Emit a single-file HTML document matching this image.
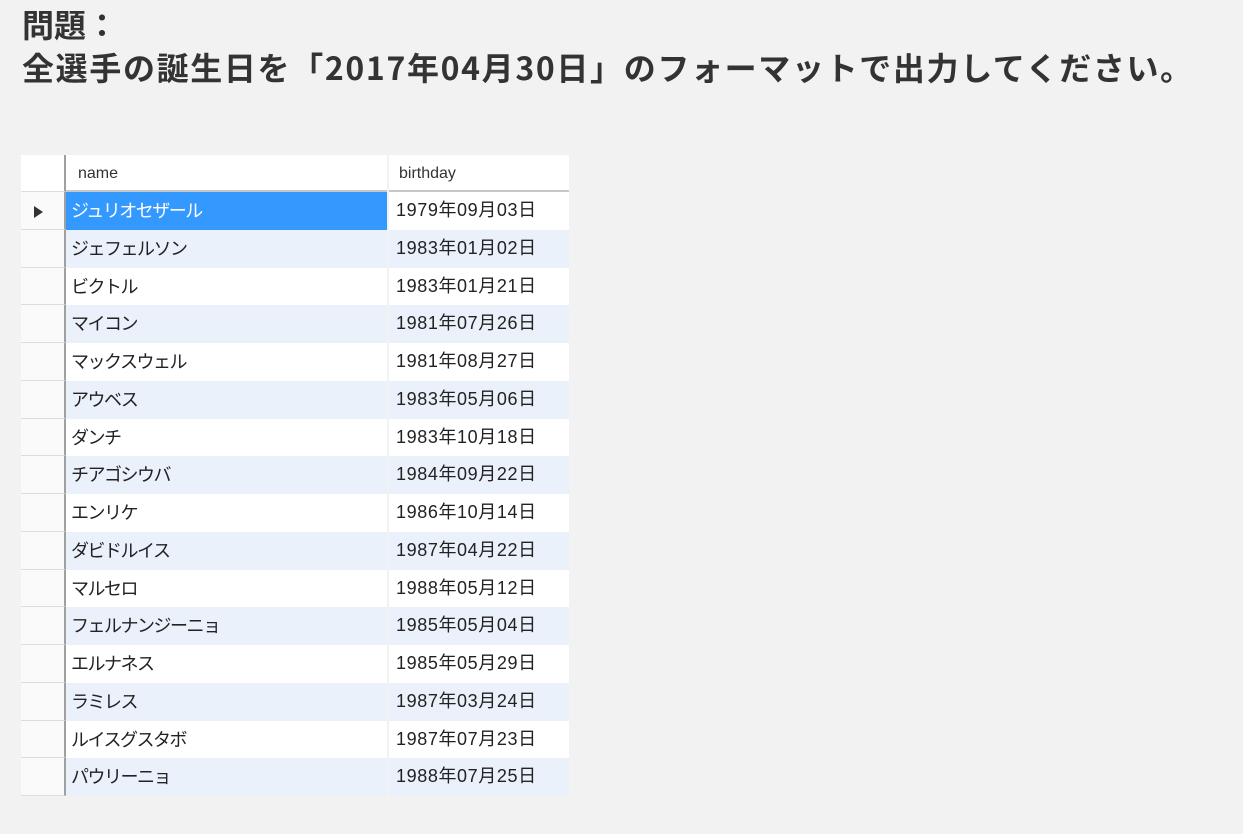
<!DOCTYPE html>
<html><head><meta charset="utf-8"><style>
body{margin:0;width:1243px;height:834px;background:#f2f2f2;overflow:hidden;position:relative;font-family:"Liberation Sans","Noto Sans CJK JP",sans-serif}
.t{position:absolute;left:22px;font-weight:bold;color:#333;font-size:32px;font-family:"Noto Sans CJK JP",sans-serif;white-space:nowrap;line-height:40px}
.tbl{position:absolute;left:21px;top:155px;width:548px}
.r{position:relative;height:37.75px;font-size:18px;color:#222}
.ind{position:absolute;left:0;top:0;width:45px;height:100%;background:#fafafa;border-bottom:1px solid #ddd;box-sizing:border-box;border-right:2px solid #a0a0a0}
.n,.b{position:absolute;top:0;height:100%;box-sizing:border-box;line-height:37px;padding-left:5px;white-space:nowrap;font-family:"Noto Sans CJK JP",sans-serif;font-weight:normal;letter-spacing:-1.5px;color:#222}
.n{left:45px;width:321px}
.b{left:368px;width:180px;padding-left:7px;font-family:"Liberation Sans","Noto Sans CJK JP",sans-serif;letter-spacing:0.6px}
.alt .n,.alt .b{background:#eaf1fb}
.r:not(.alt) .n,.r:not(.alt) .b{background:#fff}
.h .n,.h .b{background:#fff;font-size:16px;color:#333;letter-spacing:0;border-bottom:2px solid #c8c8c8;padding-left:12px;font-family:"Liberation Sans",sans-serif}
.h .b{padding-left:10px}
</style></head><body>
<div class="t" style="top:4px">問題：</div>
<div class="t" style="top:47px;letter-spacing:1.65px">全選手の誕生日を「2017年04月30日」のフォーマットで出力してください。</div>
<div class="tbl">
<div class="r h" style="height:37px"><div class="ind" style="background:#fff"></div><div class="n">name</div><div class="b">birthday</div></div>
<div class="r"><div class="ind"><svg width="12" height="14" style="position:absolute;left:12px;top:13px"><path d="M1 1L10 7L1 13Z" fill="#333"/></svg></div><div class="n" style="background:#3399ff;color:#fff">ジュリオセザール</div><div class="b">1979年09月03日</div></div>
<div class="r alt"><div class="ind"></div><div class="n">ジェフェルソン</div><div class="b">1983年01月02日</div></div>
<div class="r"><div class="ind"></div><div class="n">ビクトル</div><div class="b">1983年01月21日</div></div>
<div class="r alt"><div class="ind"></div><div class="n">マイコン</div><div class="b">1981年07月26日</div></div>
<div class="r"><div class="ind"></div><div class="n">マックスウェル</div><div class="b">1981年08月27日</div></div>
<div class="r alt"><div class="ind"></div><div class="n">アウベス</div><div class="b">1983年05月06日</div></div>
<div class="r"><div class="ind"></div><div class="n">ダンチ</div><div class="b">1983年10月18日</div></div>
<div class="r alt"><div class="ind"></div><div class="n">チアゴシウバ</div><div class="b">1984年09月22日</div></div>
<div class="r"><div class="ind"></div><div class="n">エンリケ</div><div class="b">1986年10月14日</div></div>
<div class="r alt"><div class="ind"></div><div class="n">ダビドルイス</div><div class="b">1987年04月22日</div></div>
<div class="r"><div class="ind"></div><div class="n">マルセロ</div><div class="b">1988年05月12日</div></div>
<div class="r alt"><div class="ind"></div><div class="n">フェルナンジーニョ</div><div class="b">1985年05月04日</div></div>
<div class="r"><div class="ind"></div><div class="n">エルナネス</div><div class="b">1985年05月29日</div></div>
<div class="r alt"><div class="ind"></div><div class="n">ラミレス</div><div class="b">1987年03月24日</div></div>
<div class="r"><div class="ind"></div><div class="n">ルイスグスタボ</div><div class="b">1987年07月23日</div></div>
<div class="r alt"><div class="ind"></div><div class="n">パウリーニョ</div><div class="b">1988年07月25日</div></div>
</div>
</body></html>
